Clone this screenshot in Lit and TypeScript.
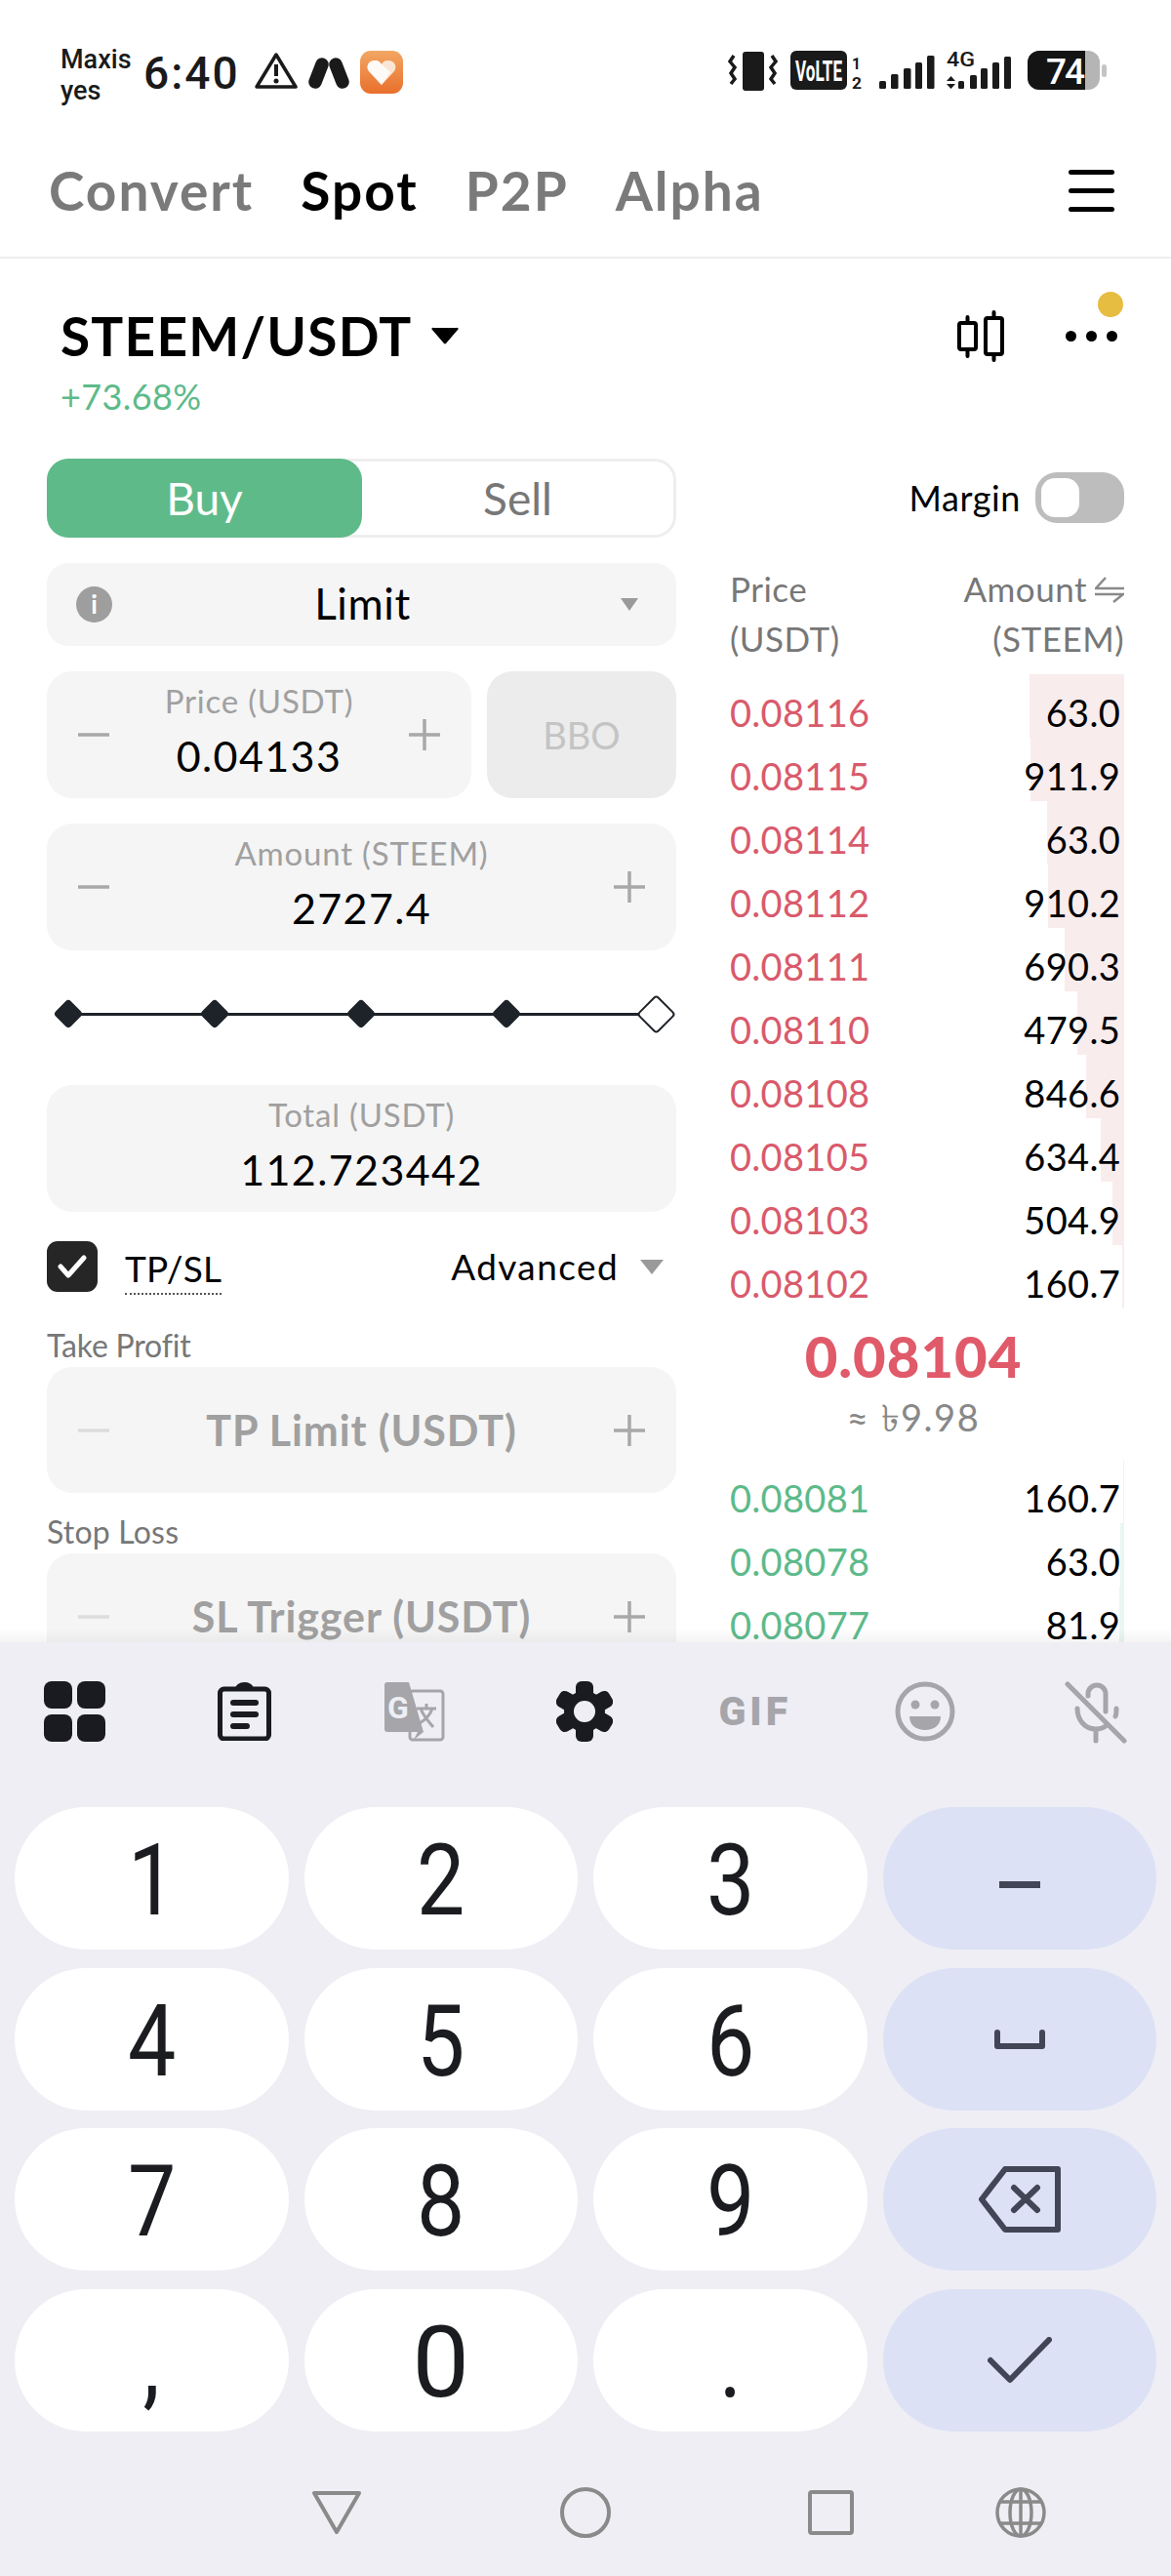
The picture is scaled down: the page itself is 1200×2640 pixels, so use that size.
import { LitElement, html, css, svg } from 'lit';
import { customElement } from 'lit/decorators.js';

const asks = [
  ['0.08116', '63.0', 97],
  ['0.08115', '911.9', 96],
  ['0.08114', '63.0', 79],
  ['0.08112', '910.2', 78],
  ['0.08111', '690.3', 61],
  ['0.08110', '479.5', 48],
  ['0.08108', '846.6', 39],
  ['0.08105', '634.4', 24],
  ['0.08103', '504.9', 12],
  ['0.08102', '160.7', 2],
];
const bids = [
  ['0.08081', '160.7', 1],
  ['0.08078', '63.0', 4],
  ['0.08077', '81.9', 5],
];

const minus = html`<svg class="step" viewBox="0 0 32 32"><path d="M0 16h32" /></svg>`;
const plus = html`<svg class="step" viewBox="0 0 32 32"><path d="M0 16h32M16 0v32" /></svg>`;
const minusFaint = html`<svg class="step faint" viewBox="0 0 32 32"><path d="M0 16h32" /></svg>`;

// everything right of the clock, one svg so the tiny offsets stay together
const statusRight = svg`
  <g fill="#1a1a1a">
    <rect x="15" y="3" width="22" height="40" rx="3" />
    <path d="M6 7 2 13l5 6-4 6 4 6-4 5M45 7l4 6-5 6 4 6-4 6 4 5" fill="none" stroke="#1a1a1a" stroke-width="3.5" />
    <rect x="64" y="2" width="58" height="40" rx="6" />
    <text x="69" y="33" font-family="Roboto" font-weight="700" font-size="29" fill="#fff" textLength="48" lengthAdjust="spacingAndGlyphs">VoLTE</text>
    <text x="127" y="21" font-family="Roboto" font-weight="700" font-size="16" textLength="9" lengthAdjust="spacingAndGlyphs">1</text>
    <text x="127" y="41" font-family="Roboto" font-weight="700" font-size="16" textLength="10" lengthAdjust="spacingAndGlyphs">2</text>
    <rect x="155" y="33" width="7" height="8" rx="1.5" />
    <rect x="167" y="26" width="7.5" height="15" rx="1.5" />
    <rect x="180" y="20" width="7.5" height="21" rx="1.5" />
    <rect x="192" y="14" width="7" height="27" rx="1.5" />
    <rect x="204" y="7" width="7.5" height="34" rx="1.5" />
    <text x="224" y="18" font-family="Roboto" font-weight="500" font-size="20" textLength="29" lengthAdjust="spacingAndGlyphs">4G</text>
    <path d="M224 33l4.500-5 4.500 5zM224 36l4.500 5 4.500-5z" />
    <rect x="236" y="33" width="6" height="8" rx="1.500" />
    <rect x="248" y="27" width="7" height="14" rx="1.500" />
    <rect x="259" y="20" width="7" height="21" rx="1.500" />
    <rect x="271" y="14" width="7" height="27" rx="1.500" />
    <rect x="283" y="8" width="7" height="33" rx="1.500" />
    <rect x="307" y="2" width="74" height="40" rx="12" fill="#b5b5b5" />
    <path d="M319 2h47v40h-47a12 12 0 0 1-12-12V14a12 12 0 0 1 12-12z" fill="#141414" />
    <rect x="383" y="16" width="5" height="13" rx="2.500" fill="#c4c4c4" />
    <text x="326" y="36" font-family="Roboto" font-weight="500" font-size="37" fill="#fff" textLength="40">74</text>
  </g>`;

@customElement('app-root')
class AppRoot extends LitElement {
  static styles = css`
    :host {
      display: block;
      position: relative;
      width: 1200px;
      height: 2640px;
      overflow: hidden;
      background: #fff;
      font-family: Lato, 'Liberation Sans', sans-serif;
      color: #000;
    }
    svg { display: block; flex: none; }

    .screen {
      position: relative;
      height: 1683px;
      overflow: hidden;
    }
    .screen::after {
      content: '';
      position: absolute;
      left: 0;
      right: 0;
      bottom: 0;
      height: 14px;
      background: linear-gradient(rgba(60, 60, 80, 0), rgba(60, 60, 80, 0.06));
    }

    /* status bar */
    .status {
      height: 130px;
      display: flex;
      justify-content: space-between;
      padding: 48px 64px 0 62px;
      box-sizing: border-box;
    }
    .status-left { display: flex; align-items: flex-start; gap: 11px; }
    .carrier {
      font-family: Roboto, sans-serif;
      font-weight: 500;
      font-size: 27px;
      line-height: 32px;
      width: 74px;
      color: #1a1a1a;
      margin-top: -3px;
    }
    .clock {
      font-family: Roboto, sans-serif;
      font-weight: 500;
      font-size: 46px;
      line-height: 50px;
      letter-spacing: 2px;
      margin: 2px 4px 0 0;
      color: #1a1a1a;
    }

    /* top tabs */
    .tabs {
      height: 135px;
      box-sizing: border-box;
      border-bottom: 2px solid #eeeeee;
      display: flex;
      align-items: center;
      padding: 0 58px 3px 50px;
      gap: 48px;
      font-size: 55px;
      font-weight: 700;
      letter-spacing: 2px;
      color: #7a7a7a;
    }
    .tabs .on { color: #000; }
    .burger {
      margin-left: auto;
      width: 47px;
      display: flex;
      flex-direction: column;
      gap: 14px;
    }
    .burger i { display: block; height: 5px; border-radius: 3px; background: #000; }

    /* market header */
    .market {
      height: 205px;
      box-sizing: border-box;
      padding: 50px 55px 0 62px;
      position: relative;
    }
    .pair { display: flex; align-items: center; height: 58px; }
    .pair-name { font-size: 55px; font-weight: 700; line-height: 58px; letter-spacing: 1.2px; }
    .pair-caret { margin: 0 0 0 20px; }
    .pair-tools { margin-left: auto; display: flex; align-items: center; }
    .dots { display: flex; gap: 10px; margin-left: 63px; position: relative; }
    .dots i { width: 11px; height: 11px; border-radius: 50%; background: #000; }
    .notice {
      position: absolute;
      top: -40px;
      right: -6px;
      width: 26px;
      height: 26px;
      border-radius: 50%;
      background: #e6bc41;
    }
    .change { color: #5dba8a; font-size: 36px; line-height: 40px; margin-top: 13px; letter-spacing: 0.4px; }

    /* two columns below it */
    .main {
      display: grid;
      grid-template-columns: 645px 432px;
      column-gap: 27px;
      padding-left: 48px;
    }
    .form { display: flex; flex-direction: column; }

    .side {
      height: 81px;
      display: flex;
      border: 3px solid #eeeeee;
      border-radius: 22px;
      box-sizing: border-box;
      font-size: 46px;
      margin-bottom: 26px;
      position: relative;
    }
    .side span { flex: 1; display: flex; align-items: center; justify-content: center; color: #777; }
    .side .buy {
      flex: none;
      width: 323px;
      margin: -3px 0 -3px -3px;
      background: #5fba8a;
      color: #fff;
      border-radius: 22px;
    }

    .box {
      background: #f5f5f5;
      border-radius: 26px;
      display: flex;
      align-items: center;
      box-sizing: border-box;
      padding: 0 32px;
    }
    .order-type {
      height: 85px;
      padding: 0 39px 0 30px;
      margin-bottom: 26px;
      font-size: 44px;
      border-radius: 22px;
    }
    .order-type b { flex: 1; text-align: center; font-weight: 400; letter-spacing: 0.6px; padding-bottom: 3px; padding-right: 8px; }
    .info {
      width: 37px;
      height: 37px;
      border-radius: 50%;
      background: #9e9e9e;
      color: #fff;
      font-size: 26px;
      font-weight: 700;
      line-height: 37px;
      text-align: center;
    }

    .field { height: 130px; }
    .stack {
      flex: 1;
      align-self: flex-start;
      padding-top: 10px;
      text-align: center;
    }
    .stack small {
      display: block;
      color: #a0a0a0;
      font-size: 33px;
      line-height: 40px;
      letter-spacing: 0.8px;
    }
    .stack strong {
      display: block;
      font-weight: 400;
      font-size: 43px;
      line-height: 50px;
      letter-spacing: 1.4px;
      margin-top: 12px;
    }
    .step { width: 32px; height: 32px; }
    .step path { stroke: #a8a8a8; stroke-width: 3.5; fill: none; }
    .step.faint path { stroke: #dcdcdc; }

    .price-row { display: flex; gap: 16px; margin-bottom: 26px; }
    .price-row .field { flex: 1; }
    .bbo {
      width: 194px;
      height: 130px;
      border-radius: 26px;
      background: #ececec;
      color: #c4c4c4;
      font-size: 38px;
      display: flex;
      align-items: center;
      justify-content: center;
    }

    .slider {
      height: 138px;
      padding: 43px 0 0 11px;
      box-sizing: border-box;
    }
    .track {
      width: 628px;
      height: 44px;
      display: flex;
      align-items: center;
      justify-content: space-between;
      background: linear-gradient(#1e2329, #1e2329) center / 100% 3px no-repeat;
    }
    .track i {
      width: 22px;
      height: 22px;
      background: #1e2329;
      border-radius: 4px;
      transform: rotate(45deg);
    }
    .track i.end {
      width: 29px;
      height: 29px;
      box-sizing: border-box;
      background: #fff;
      border: 2.5px solid #1e2329;
    }

    .tpsl {
      display: flex;
      align-items: center;
      margin-top: 30px;
      height: 52px;
      font-size: 37px;
    }
    .check {
      width: 52px;
      height: 52px;
      border-radius: 11px;
      background: #262626;
      display: flex;
      align-items: center;
      justify-content: center;
    }
    .tpsl-label {
      margin-left: 28px;
      line-height: 40px;
      margin-top: 10px;
      padding-bottom: 5px;
      border-bottom: 2px dotted #555;
      letter-spacing: 0.2px;
    }
    .advanced { margin-left: auto; margin-right: 22px; letter-spacing: 1.4px; padding-bottom: 2px; }
    .note {
      color: #777;
      font-size: 32px;
      line-height: 34px;
      margin-top: 38px;
      margin-bottom: 5px;
      letter-spacing: -0.2px;
    }
    .note.second { margin-top: 23px; letter-spacing: 0.2px; }
    .ghost {
      height: 129px;
      flex: none;
    }
    .ghost span {
      flex: 1;
      text-align: center;
      color: #a0a0a0;
      font-size: 43px;
      font-weight: 700;
      letter-spacing: 0.9px;
    }

    /* order book */
    .margin-row {
      height: 108px;
      box-sizing: border-box;
      padding-top: 14px;
      display: flex;
      justify-content: flex-end;
      gap: 15px;
      font-size: 36px;
      letter-spacing: 0.6px;
    }
    .margin-row span { line-height: 52px; }
    .toggle {
      width: 91px;
      height: 52px;
      border-radius: 22px;
      background: #bdbdbd;
      box-sizing: border-box;
      padding: 6px;
    }
    .toggle i { display: block; width: 39px; height: 40px; border-radius: 14px; background: #fff; }
    .book-head {
      display: flex;
      justify-content: space-between;
      padding-left: 28px;
      font-size: 35px;
      letter-spacing: 0.5px;
      line-height: 51px;
      color: #777;
      height: 113px;
    }
    .book-head div:last-child { text-align: right; }
    .swap { display: inline-block; vertical-align: -1px; margin-left: 8px; }
    .row {
      position: relative;
      height: 65px;
      display: flex;
      justify-content: space-between;
      align-items: center;
      box-sizing: border-box;
      padding: 13px 4px 0 28px;
      font-size: 38px;
      letter-spacing: 0.3px;
    }
    .row i {
      position: absolute;
      top: 0;
      bottom: 0;
      right: 0;
    }
    .row span { position: relative; }
    .ask .p { color: #d95a6b; }
    .bid .p { color: #5dba8a; }
    .ask i { background: #f9eced; }
    .bid i { background: #eaf6f0; }
    .mid { height: 155px; text-align: center; padding-top: 19px; box-sizing: border-box; }
    .mid-price { color: #e05a6a; font-size: 58px; font-weight: 900; line-height: 60px; letter-spacing: 1px; }
    .mid-fiat {
      color: #888;
      font-size: 38px;
      line-height: 44px;
      margin-top: 10px;
      letter-spacing: 1.5px;
      font-family: Lato, 'Noto Sans', 'DejaVu Sans', sans-serif;
    }

    /* keyboard */
    .keyboard { height: 957px; background: #eeeef4; }
    .tools {
      height: 169px;
      box-sizing: border-box;
      padding-bottom: 28px;
      margin-left: -11px;
      display: grid;
      grid-template-columns: repeat(7, 174.4px);
      justify-items: center;
      align-items: center;
    }
    .gif {
      font-family: Roboto, sans-serif;
      font-size: 41px;
      font-weight: 900;
      letter-spacing: 4px;
      color: #a5a5aa;
    }
    .keys {
      display: grid;
      grid-template-columns: repeat(4, 1fr);
      grid-auto-rows: 146px;
      gap: 18.5px 16px;
      padding: 0 15px;
    }
    .key {
      border-radius: 73px;
      background: #fff;
      display: flex;
      align-items: center;
      justify-content: center;
      font-family: Roboto, sans-serif;
      font-size: 102px;
      color: #1b1c20;
    }
    .key span { display: block; transform: translateY(2px) scaleX(0.86); }
    .key span.wide { transform: translateY(2px) scaleX(1.02); }
    .key.fn { background: #dde1f5; }
    .nav {
      display: grid;
      grid-template-columns: 255px 254px 192px 52px;
      padding: 60px 0 0 319px;
    }
  `;

  private bookRow(side: string, r: (string | number)[]) {
    return html`<div class="row ${side}">
      <i style="width:${r[2]}px"></i>
      <span class="p">${r[0]}</span>
      <span>${r[1]}</span>
    </div>`;
  }

  render() {
    return html`
      <div class="screen">
        <div class="status">
          <div class="status-left">
            <div class="carrier">Maxis<br />yes</div>
            <div class="clock">6:40</div>
            <svg width="44" height="38" viewBox="0 0 44 38" style="margin-top:5px">
              <path d="M22 3 42 36H2Z" fill="none" stroke="#1a1a1a" stroke-width="3.500" stroke-linejoin="round" />
              <rect x="20" y="13" width="4" height="12" fill="#1a1a1a" />
              <circle cx="22" cy="30" r="2.500" fill="#1a1a1a" />
            </svg>
            <svg width="42" height="32" viewBox="0 0 42 32" style="margin-top:11px">
              <path d="M7 25 14 7M28 7l7 18" stroke="#1a1a1a" stroke-width="13.500" stroke-linecap="round" fill="none" />
            </svg>
            <svg width="44" height="44" viewBox="0 0 44 44" style="margin-top:4px">
              <defs>
                <linearGradient id="og" x1="0" y1="0" x2="0" y2="1">
                  <stop offset="0" stop-color="#f2a763" />
                  <stop offset="1" stop-color="#e96f2c" />
                </linearGradient>
              </defs>
              <rect width="44" height="44" rx="11" fill="url(#og)" />
              <path d="M22 35 9 21C5 15 10 9 16 10c3 0 5 2 6 4 1-2 3-4 6-4 6-1 11 5 7 11Z" fill="#fbe6d6" />
              <path d="M22 35 9 21C5 15 10 9 16 10c2 0 3 1 4 2l11 10-9 13Z" fill="#fff" opacity=".8" />
            </svg>
          </div>
          <svg width="390" height="46" viewBox="0 0 390 46" style="margin-top:2px">${statusRight}</svg>
        </div>

        <div class="tabs">
          <span>Convert</span><span class="on">Spot</span><span>P2P</span><span>Alpha</span>
          <div class="burger"><i></i><i></i><i></i></div>
        </div>

        <div class="market">
          <div class="pair">
            <span class="pair-name">STEEM/USDT</span>
            <svg class="pair-caret" width="28" height="18" viewBox="0 0 28 18"><path d="M2 1h24a1 1 0 0 1 1 2L15 17a1.500 1.500 0 0 1-2 0L1 3a1 1 0 0 1 1-2Z" /></svg>
            <div class="pair-tools">
              <svg width="48" height="53" viewBox="0 0 48 53" fill="none" stroke="#000" stroke-width="4" stroke-linecap="round">
                <rect x="2" y="13" width="17" height="27" rx="2" />
                <rect x="29" y="8" width="17" height="37" rx="2" />
                <path d="M10.500 7v5M10.500 41v6M37.500 2v5M37.500 46v5" />
              </svg>
              <div class="dots"><i></i><i></i><i></i><span class="notice"></span></div>
            </div>
          </div>
          <div class="change">+73.68%</div>
        </div>

        <div class="main">
          <div class="form">
            <div class="side"><span class="buy">Buy</span><span>Sell</span></div>

            <div class="box order-type">
              <span class="info">i</span>
              <b>Limit</b>
              <svg width="18" height="13" viewBox="0 0 18 13"><path d="M0 0h18L9 13Z" fill="#9a9a9a" /></svg>
            </div>

            <div class="price-row">
              <div class="box field">
                ${minus}
                <div class="stack"><small>Price (USDT)</small><strong>0.04133</strong></div>
                ${plus}
              </div>
              <div class="bbo">BBO</div>
            </div>

            <div class="box field">
              ${minus}
              <div class="stack"><small>Amount (STEEM)</small><strong>2727.4</strong></div>
              ${plus}
            </div>

            <div class="slider">
              <div class="track"><i></i><i></i><i></i><i></i><i class="end"></i></div>
            </div>

            <div class="box field">
              <div class="stack"><small>Total (USDT)</small><strong>112.723442</strong></div>
            </div>

            <div class="tpsl">
              <span class="check">
                <svg width="30" height="26" viewBox="0 0 30 26" fill="none" stroke="#fff" stroke-width="5" stroke-linecap="round" stroke-linejoin="round"><path d="M3 13l8 9L27 4" /></svg>
              </span>
              <span class="tpsl-label">TP/SL</span>
              <span class="advanced">Advanced</span>
              <svg width="24" height="15" viewBox="0 0 24 15" style="margin-right:13px"><path d="M0 0h24L12 15Z" fill="#9a9a9a" /></svg>
            </div>

            <div class="note">Take Profit</div>
            <div class="box ghost">${minusFaint}<span>TP Limit (USDT)</span>${plus}</div>
            <div class="note second">Stop Loss</div>
            <div class="box ghost">${minusFaint}<span>SL Trigger (USDT)</span>${plus}</div>
          </div>

          <div class="book">
            <div class="margin-row">
              <span>Margin</span>
              <div class="toggle"><i></i></div>
            </div>
            <div class="book-head">
              <div>Price<br />(USDT)</div>
              <div>
                Amount<svg class="swap" style="display:inline-block" width="30" height="27" viewBox="0 0 30 27" fill="none" stroke="#8a8a8a" stroke-width="2.500"><path d="M11 1 1 12h29M0 18h29l-10 8" /></svg><br />(STEEM)
              </div>
            </div>
            ${asks.map(r => this.bookRow('ask', r))}
            <div class="mid">
              <div class="mid-price">0.08104</div>
              <div class="mid-fiat">≈ ৳9.98</div>
            </div>
            ${bids.map(r => this.bookRow('bid', r))}
          </div>
        </div>
      </div>

      <div class="keyboard">
        <div class="tools">
          <svg width="63" height="62" viewBox="0 0 63 62" fill="#191b20">
            <rect width="29" height="28" rx="8" /><rect x="34" width="29" height="28" rx="8" />
            <rect y="34" width="29" height="28" rx="8" /><rect x="34" y="34" width="29" height="28" rx="8" />
          </svg>
          <svg width="55" height="60" viewBox="0 0 55 60">
            <rect x="2.500" y="7" width="50" height="51" rx="4" fill="none" stroke="#191b20" stroke-width="5" />
            <path d="M18 7a9.500 7 0 0 1 19 0z" fill="#191b20" />
            <rect x="13" y="18" width="29" height="6" rx="3" fill="#191b20" />
            <rect x="13" y="30" width="29" height="6" rx="3" fill="#191b20" />
            <rect x="13" y="42" width="20" height="6" rx="3" fill="#191b20" />
          </svg>
          <svg width="62" height="62" viewBox="0 0 62 62">
            <rect x="26" y="10" width="34" height="50" rx="3" fill="none" stroke="#a5a5aa" stroke-width="3" />
            <path d="M3 1h22l15 51H3a3 3 0 0 1-3-3V4a3 3 0 0 1 3-3Z" fill="#a5a5aa" />
            <path d="M30 60l10-8-4-4z" fill="#a5a5aa" />
            <text x="3" y="38" font-family="Roboto" font-weight="700" font-size="32" fill="#eeeef4">G</text>
            <path d="M33 28h20M43 23v5M37 28c3 8 9 14 13 19M49 28c-2 6-8 12-13 15" fill="none" stroke="#a5a5aa" stroke-width="3" />
          </svg>
          <svg width="58" height="62" viewBox="-29 -31 58 62">
            <circle r="21" fill="#191b20" />
            ${[0, 60, 120, 180, 240, 300].map(
              a => svg`<rect x="-9" y="-31" width="18" height="22" rx="6" fill="#191b20" transform="rotate(${a})" />`,
            )}
            <circle r="11" fill="#eeeef4" />
          </svg>
          <span class="gif">GIF</span>
          <svg width="62" height="62" viewBox="0 0 62 62">
            <circle cx="31" cy="31" r="28" fill="none" stroke="#a5a5aa" stroke-width="5" />
            <circle cx="21" cy="24" r="4.500" fill="#a5a5aa" />
            <circle cx="41" cy="24" r="4.500" fill="#a5a5aa" />
            <path d="M15 36h32c0 9-7 14-16 14s-16-5-16-14Z" fill="#a5a5aa" />
          </svg>
          <svg width="64" height="66" viewBox="0 0 64 66" fill="none" stroke="#a5a5aa" stroke-width="5" stroke-linecap="round">
            <path d="M3 5l58 58" />
            <path d="M24 17v-2a9 9 0 0 1 18 0v18" />
            <path d="M13 30c0 12 8 21 19 21 4 0 8-1 11-4M52 38c1-2 1-5 1-8M32 51v12" />
          </svg>
        </div>

        <div class="keys">
          <div class="key"><span>1</span></div>
          <div class="key"><span>2</span></div>
          <div class="key"><span>3</span></div>
          <div class="key fn">
            <svg width="42" height="7" viewBox="0 0 42 7" style="margin-top:13px"><rect width="42" height="7" fill="#414556" /></svg>
          </div>
          <div class="key"><span>4</span></div>
          <div class="key"><span>5</span></div>
          <div class="key"><span>6</span></div>
          <div class="key fn">
            <svg width="52" height="20" viewBox="0 0 52 20" fill="none" stroke="#414556" stroke-width="6" stroke-linecap="round" stroke-linejoin="round"><path d="M3 3v14h46V3" /></svg>
          </div>
          <div class="key"><span>7</span></div>
          <div class="key"><span>8</span></div>
          <div class="key"><span>9</span></div>
          <div class="key fn">
            <svg width="84" height="68" viewBox="0 0 84 68" fill="none" stroke="#414556" stroke-width="6" stroke-linecap="round" stroke-linejoin="round"><path d="M27 3h54v62H27L3 34ZM36 22l24 23M60 22 36 45" /></svg>
          </div>
          <div class="key"><span>,</span></div>
          <div class="key"><span class="wide">0</span></div>
          <div class="key"><span>.</span></div>
          <div class="key fn">
            <svg width="66" height="48" viewBox="0 0 66 48" fill="none" stroke="#414556" stroke-width="6" stroke-linecap="round" stroke-linejoin="round"><path d="M3 24l20 20L63 3" /></svg>
          </div>
        </div>

        <div class="nav">
          <svg width="52" height="46" viewBox="0 0 52 46" fill="none" stroke="#8a8a8a" stroke-width="4" stroke-linejoin="round"><path d="M3 3h46L26 43Z" /></svg>
          <svg width="52" height="52" viewBox="0 0 52 52" style="margin-top:-3px" fill="none" stroke="#8a8a8a" stroke-width="4"><circle cx="26" cy="26" r="24" /></svg>
          <svg width="47" height="46" viewBox="0 0 47 46" fill="none" stroke="#8a8a8a" stroke-width="4" stroke-linejoin="round"><rect x="2" y="2" width="43" height="42" rx="2" /></svg>
          <svg width="52" height="52" viewBox="0 0 52 52" style="margin-top:-3px" fill="none" stroke="#8a8a8a" stroke-width="3.500"><circle cx="26" cy="26" r="24" /><ellipse cx="26" cy="26" rx="11" ry="24" /><path d="M26 2v48M5 15h42M5 37h42" /></svg>
        </div>
      </div>
    `;
  }
}
